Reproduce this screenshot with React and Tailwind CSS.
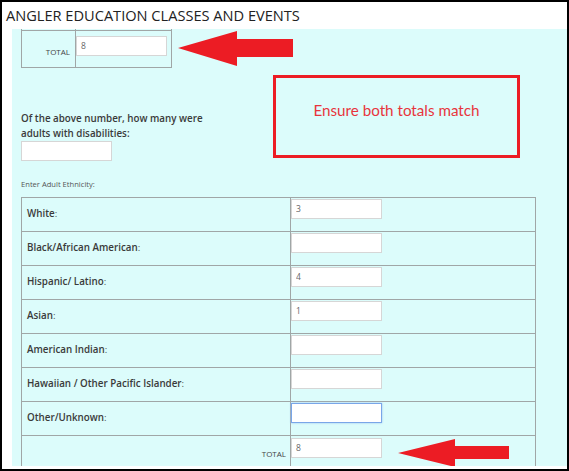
import React from "react";

const rows = [
  { label: "White", value: "3" },
  { label: "Black/African American", value: "" },
  { label: "Hispanic/ Latino", value: "4" },
  { label: "Asian", value: "1" },
  { label: "American Indian", value: "" },
  { label: "Hawaiian / Other Pacific Islander", value: "" },
  { label: "Other/Unknown", value: "", focused: true },
];

const Box = ({ value, focused, className = "" }) => (
  <input
    readOnly
    value={value}
    className={`block h-[20px] bg-white pl-[4px] pb-[2px] text-[8.5px] text-[#666] outline-none border ${
      focused
        ? "border-[#79a6e8] shadow-[0_0_2px_#9cc0f0]"
        : "border-[#d6d6d6]"
    } ${className}`}
  />
);

const App = () => {
  return (
    <div
      className="w-[569px] h-[471px] overflow-hidden border-2 border-black bg-white"
      style={{ fontFamily: '"Open Sans", "DejaVu Sans", sans-serif' }}
    >
      {/* header */}
      <div className="h-[27px] flex items-center pl-[4px] text-[14.6px] text-[#222] leading-none">
        ANGLER EDUCATION CLASSES AND EVENTS
      </div>

      {/* cyan panel */}
      <div className="relative ml-[10px] h-[437px] overflow-hidden bg-[#dcfcfb] pl-[9px]">
        {/* top table, previous row cut off */}
        <div className="w-[151px]">
          <div className="flex h-[1px]">
            <div className="w-[55px] border-l border-r border-[#a0a6a6]" />
            <div className="flex-1 border-r border-[#a0a6a6]" />
          </div>
          <div className="flex h-[38px] border border-[#a0a6a6]">
            <div className="w-[54px] border-r border-[#a0a6a6] flex items-center justify-end pr-[5px] pt-[5px] text-[8px] text-[#444]">
              TOTAL
            </div>
            <div className="flex-1 pt-[5px]">
              <Box value="8" className="w-[91px]" />
            </div>
          </div>
        </div>

        {/* disabilities question */}
        <div className="mt-[43px] w-[215px] text-[9.8px] leading-[15px] font-semibold text-[#3a3a3a]">
          Of the above number, how many were
          <br />
          adults with disabilities:
        </div>
        <Box value="" className="w-[91px]" />

        <div className="mt-[17px] h-[12px] leading-[12px] text-[7.6px] text-[#555]">
          Enter Adult Ethnicity:
        </div>

        {/* ethnicity table */}
        <div className="mt-[7px] w-[515px] border-t border-l border-r border-[#a0a6a6]">
          {rows.map((r) => (
            <div key={r.label} className="flex h-[34px] border-b border-[#a0a6a6]">
              <div className="w-[269px] border-r border-[#a0a6a6] flex items-center pl-[5px] text-[9.8px] text-[#3a3a3a]">
                <span className="font-semibold">{r.label}</span>
                <span className="text-[#555]">:</span>
              </div>
              <div className="flex-1 pt-[1px]">
                <Box value={r.value} focused={r.focused} className="w-[91px]" />
              </div>
            </div>
          ))}
          <div className="flex h-[34px]">
            <div className="w-[269px] border-r border-[#a0a6a6] flex items-center justify-end pr-[4px] pt-[2px] text-[8px] text-[#444]">
              TOTAL
            </div>
            <div className="flex-1 pt-[2px]">
              <Box value="8" className="w-[91px]" />
            </div>
          </div>
        </div>

        {/* callout box */}
        <div
          className="absolute left-[261px] top-[46px] w-[247px] h-[83px] border-[3px] border-[#ec1c24] flex items-center justify-center pb-[12px] text-[15.2px] text-[#e8343c]"
          style={{ fontFamily: 'Lato, "Open Sans", sans-serif' }}
        >
          Ensure both totals match
        </div>

        {/* top arrow */}
        <svg className="absolute left-[166px] top-[2px]" width="116" height="36" viewBox="0 0 116 36">
          <polygon points="0,17 59,0 59,8 115,8 115,26 59,26 59,35" fill="#ec1c24" />
        </svg>

        {/* bottom arrow */}
        <svg className="absolute left-[386px] top-[410px]" width="112" height="29" viewBox="0 0 112 29">
          <polygon points="0,14 57,0 57,7 111,7 111,20 57,20 57,28" fill="#ec1c24" />
        </svg>
      </div>
    </div>
  );
};

export default App;
